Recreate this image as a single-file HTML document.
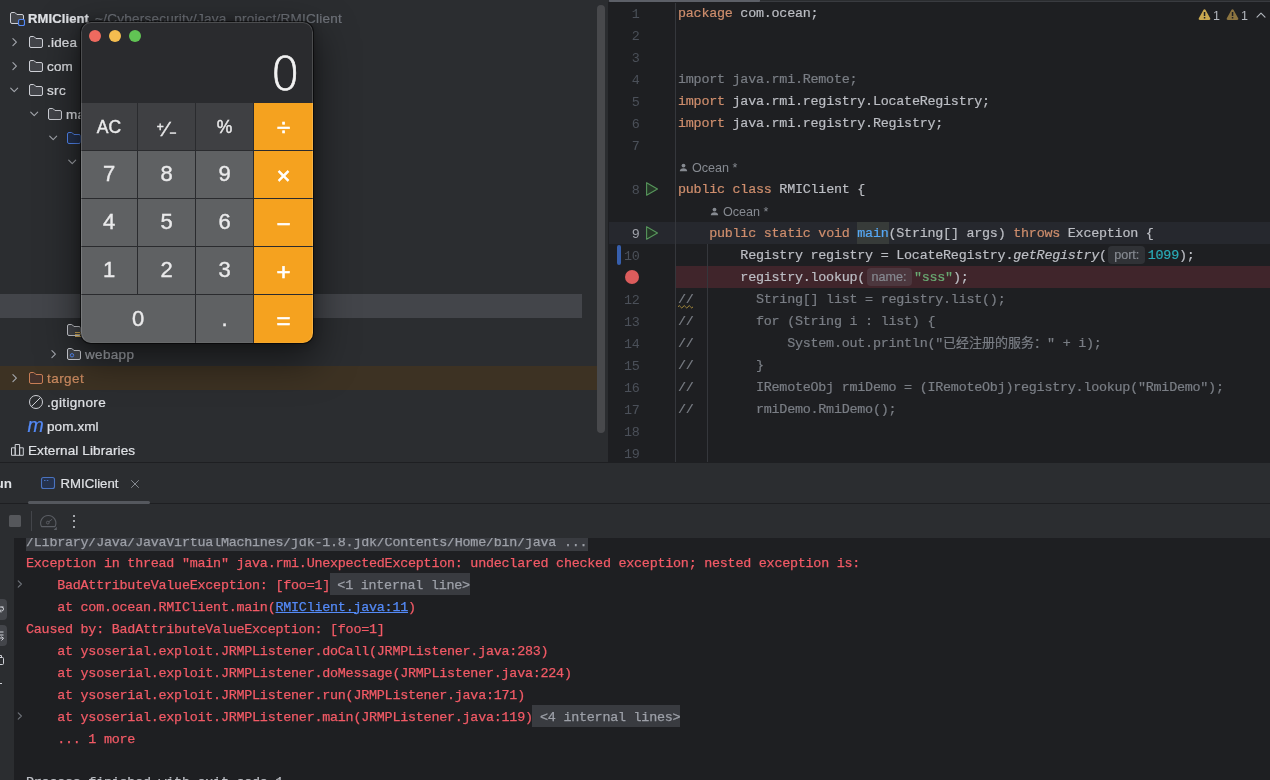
<!DOCTYPE html>
<html lang="en">
<head>
<meta charset="utf-8">
<title>RMIClient</title>
<style>
*{box-sizing:border-box;margin:0;padding:0}
html,body{width:1270px;height:780px;overflow:hidden;background:#2b2d30}
body{position:relative;font-family:"Liberation Sans","Noto Sans CJK SC",sans-serif;font-size:13px;color:#dfe1e5}
.abs{position:absolute}
/* project tree */
#tree{position:absolute;left:0;top:0;width:608px;height:462px;background:#2b2d30;overflow:hidden}
.row{position:absolute;left:0;width:597px;height:24px;line-height:24px;white-space:nowrap;font-size:13.500px;color:#dfe1e5;letter-spacing:0.200px}
.row .t{position:absolute;top:0.500px;-webkit-text-stroke:0.220px currentColor}
.row svg{position:absolute}
.sel{background:#43454a;width:582px}
.excl{background:#3d3223}
.dim{color:#6f737a}
/* editor */
#editor{position:absolute;left:609px;top:0;width:661px;height:462px;background:#1e1f22;overflow:hidden}
.ln{margin-top:2px;position:absolute;left:0;width:30.500px;text-align:right;height:22px;line-height:22px;font-family:"Liberation Mono",monospace;font-size:13.400px;letter-spacing:-0.240px;color:#4b5059}
.cl{-webkit-text-stroke:0.200px currentColor;margin-top:1.400px;position:absolute;left:69px;height:22px;line-height:22px;white-space:pre;font-family:"Liberation Mono","Noto Sans CJK SC",monospace;font-size:13.400px;letter-spacing:-0.240px;color:#bcbec4}
.k{color:#cf8e6d}.s{color:#6aab73}.n{color:#2aacb8}.c{color:#7a7e85}.m{color:#56a8f5}
.hint{letter-spacing:0;display:inline-block;font-family:"Liberation Sans",sans-serif;font-size:12.6px;color:#868a91;background:rgba(140,150,160,.16);border-radius:4px;height:18px;line-height:18px;text-align:center;vertical-align:top;margin-top:0.600px;margin-left:1.500px}
.auth{margin-top:0.700px;position:absolute;height:22px;line-height:22px;font-size:12.6px;color:#868a91;white-space:nowrap}
/* bottom */
#bottom{position:absolute;left:0;top:462px;width:1270px;height:318px;background:#2b2d30}
#console{position:absolute;left:14px;top:76px;width:1256px;height:242px;background:#1e1f22;overflow:hidden}
.ol{-webkit-text-stroke:0.250px currentColor;margin-top:1.500px;position:absolute;left:12px;height:22px;line-height:22px;white-space:pre;font-family:"Liberation Mono",monospace;font-size:13.400px;letter-spacing:-0.240px;color:#f25a66}
.fold{background:#393b40;color:#9da0a8;display:inline-block;height:22px;line-height:22px;margin-top:-1.500px;padding-top:1.500px;vertical-align:top;margin-left:-0.500px}
.lnk{color:#548af7;text-decoration:underline}

#calc{position:absolute;left:81px;top:22px;width:232px;height:321px;border-radius:10px;background:#2a2b2e;box-shadow:0 0 0 1px rgba(0,0,0,.55),0 14px 38px 4px rgba(0,0,0,.5),0 0 10px rgba(0,0,0,.3);overflow:hidden;font-family:"Liberation Sans",sans-serif}
#calc:after{content:"";position:absolute;left:0;top:0;right:0;bottom:0;border-radius:10px;border:1px solid rgba(255,255,255,.16);pointer-events:none;border-bottom-color:rgba(255,255,255,.05)}
#calc .tl{position:absolute;top:8px;width:12px;height:12px;border-radius:50%}
#calc .b{position:absolute;height:47px;line-height:46px;-webkit-text-stroke:0.400px #eaeaeb;text-align:center;color:#eaeaeb;font-size:22px;background:#5f6163}
#calc .f{background:#3f4043;font-size:17.500px;-webkit-text-stroke:0.400px #eaeaeb;padding-top:1px}
#calc .o{background:#f5a21f;color:#fff;font-size:24px;-webkit-text-stroke:0.600px #fff;padding-top:2px}
#disp{position:absolute;right:13px;top:25px;height:54px;line-height:54px;font-family:"DejaVu Sans Light","DejaVu Sans",sans-serif;font-weight:200;font-size:46.500px;color:#f2f2f2;-webkit-text-stroke:0.700px #f2f2f2}
</style>
</head>
<body>
<div id="root" style="position:absolute;left:0;top:0;width:1270px;height:780px;will-change:transform">
<div id="tree">
<div class="row " style="top:6px"><svg style="left:9px;top:4px" width="16" height="16" viewBox="0 0 16 16"><path d="M1.5 4a1.5 1.5 0 0 1 1.5-1.5h2.6a1 1 0 0 1 .75.34L7.9 4.5h5.1a1.5 1.5 0 0 1 1.5 1.5v6a1.5 1.5 0 0 1-1.5 1.5h-10a1.5 1.5 0 0 1-1.5-1.5z" fill="#43454a" stroke="#ced0d6" stroke-width="1"/><rect x="9.5" y="9.5" width="6" height="6" rx="1.5" fill="#2b2d30" stroke="#548af7" stroke-width="1.2"/></svg><span class="t " style="left:28px;font-weight:700;font-size:13px;letter-spacing:0.120px">RMIClient</span><span class="t dim" style="left:95px;letter-spacing:0.250px">~/Cybersecurity/Java_project/RMIClient</span></div>
<div class="row " style="top:30px"><svg style="left:6px;top:4px" width="16" height="16" viewBox="0 0 16 16"><path d="M6.900 4.700l3.500 3.500-3.500 3.500" fill="none" stroke="#a4a7ad" stroke-width="1.100" stroke-linecap="round" stroke-linejoin="round"/></svg><svg style="left:28px;top:4px" width="16" height="16" viewBox="0 0 16 16"><path d="M1.5 4a1.5 1.5 0 0 1 1.5-1.5h2.6a1 1 0 0 1 .75.34L7.9 4.5h5.1a1.5 1.5 0 0 1 1.5 1.5v6a1.5 1.5 0 0 1-1.5 1.5h-10a1.5 1.5 0 0 1-1.5-1.5z" fill="#43454a" stroke="#ced0d6" stroke-width="1"/></svg><span class="t " style="left:47px;letter-spacing:0.200px">.idea</span></div>
<div class="row " style="top:54px"><svg style="left:6px;top:4px" width="16" height="16" viewBox="0 0 16 16"><path d="M6.900 4.700l3.500 3.500-3.500 3.500" fill="none" stroke="#a4a7ad" stroke-width="1.100" stroke-linecap="round" stroke-linejoin="round"/></svg><svg style="left:28px;top:4px" width="16" height="16" viewBox="0 0 16 16"><path d="M1.5 4a1.5 1.5 0 0 1 1.5-1.5h2.6a1 1 0 0 1 .75.34L7.9 4.5h5.1a1.5 1.5 0 0 1 1.5 1.5v6a1.5 1.5 0 0 1-1.5 1.5h-10a1.5 1.5 0 0 1-1.5-1.5z" fill="#43454a" stroke="#ced0d6" stroke-width="1"/></svg><span class="t " style="left:47px;letter-spacing:0.160px">com</span></div>
<div class="row " style="top:78px"><svg style="left:6px;top:4px" width="16" height="16" viewBox="0 0 16 16"><path d="M4.700 6.100l3.500 3.500 3.500-3.500" fill="none" stroke="#a4a7ad" stroke-width="1.100" stroke-linecap="round" stroke-linejoin="round"/></svg><svg style="left:28px;top:4px" width="16" height="16" viewBox="0 0 16 16"><path d="M1.5 4a1.5 1.5 0 0 1 1.5-1.5h2.6a1 1 0 0 1 .75.34L7.9 4.5h5.1a1.5 1.5 0 0 1 1.5 1.5v6a1.5 1.5 0 0 1-1.5 1.5h-10a1.5 1.5 0 0 1-1.5-1.5z" fill="#43454a" stroke="#ced0d6" stroke-width="1"/></svg><span class="t " style="left:47px;letter-spacing:0.330px">src</span></div>
<div class="row " style="top:102px"><svg style="left:26px;top:4px" width="16" height="16" viewBox="0 0 16 16"><path d="M4.700 6.100l3.500 3.500 3.500-3.500" fill="none" stroke="#a4a7ad" stroke-width="1.100" stroke-linecap="round" stroke-linejoin="round"/></svg><svg style="left:47px;top:4px" width="16" height="16" viewBox="0 0 16 16"><path d="M1.5 4a1.5 1.5 0 0 1 1.5-1.5h2.6a1 1 0 0 1 .75.34L7.9 4.5h5.1a1.5 1.5 0 0 1 1.5 1.5v6a1.5 1.5 0 0 1-1.5 1.5h-10a1.5 1.5 0 0 1-1.5-1.5z" fill="#43454a" stroke="#ced0d6" stroke-width="1"/></svg><span class="t " style="left:66px;letter-spacing:0.200px">main</span></div>
<div class="row " style="top:126px"><svg style="left:45px;top:4px" width="16" height="16" viewBox="0 0 16 16"><path d="M4.700 6.100l3.500 3.500 3.500-3.500" fill="none" stroke="#a4a7ad" stroke-width="1.100" stroke-linecap="round" stroke-linejoin="round"/></svg><svg style="left:66px;top:4px" width="16" height="16" viewBox="0 0 16 16"><path d="M1.5 4a1.5 1.5 0 0 1 1.5-1.5h2.6a1 1 0 0 1 .75.34L7.9 4.5h5.1a1.5 1.5 0 0 1 1.5 1.5v6a1.5 1.5 0 0 1-1.5 1.5h-10a1.5 1.5 0 0 1-1.5-1.5z" fill="#25324d" stroke="#548af7" stroke-width="1"/></svg><span class="t " style="left:85px;letter-spacing:0.200px">java</span></div>
<div class="row " style="top:150px"><svg style="left:64px;top:4px" width="16" height="16" viewBox="0 0 16 16"><path d="M4.700 6.100l3.500 3.500 3.500-3.500" fill="none" stroke="#a4a7ad" stroke-width="1.100" stroke-linecap="round" stroke-linejoin="round"/></svg><svg style="left:85px;top:4px" width="16" height="16" viewBox="0 0 16 16"><path d="M1.5 4a1.5 1.5 0 0 1 1.5-1.5h2.6a1 1 0 0 1 .75.34L7.9 4.5h5.1a1.5 1.5 0 0 1 1.5 1.5v6a1.5 1.5 0 0 1-1.5 1.5h-10a1.5 1.5 0 0 1-1.5-1.5z" fill="#43454a" stroke="#ced0d6" stroke-width="1"/></svg><span class="t " style="left:104px;letter-spacing:0.200px">com.ocean</span></div>
<div class="row sel" style="top:294px"></div>
<div class="row " style="top:318px"><svg style="left:66px;top:4px" width="16" height="16" viewBox="0 0 16 16"><path d="M1.5 4a1.5 1.5 0 0 1 1.5-1.5h2.6a1 1 0 0 1 .75.34L7.9 4.5h5.1a1.5 1.5 0 0 1 1.5 1.5v6a1.5 1.5 0 0 1-1.5 1.5h-10a1.5 1.5 0 0 1-1.5-1.5z" fill="#43454a" stroke="#ced0d6" stroke-width="1"/><path d="M9 10.5h6M9 12.5h6M9 14.5h6" stroke="#d6ae58" stroke-width="1"/></svg><span class="t " style="left:85px;letter-spacing:0.200px">resources</span></div>
<div class="row " style="top:342px"><svg style="left:45px;top:4px" width="16" height="16" viewBox="0 0 16 16"><path d="M6.900 4.700l3.500 3.500-3.500 3.500" fill="none" stroke="#a4a7ad" stroke-width="1.100" stroke-linecap="round" stroke-linejoin="round"/></svg><svg style="left:66px;top:4px" width="16" height="16" viewBox="0 0 16 16"><path d="M1.5 4a1.5 1.5 0 0 1 1.5-1.5h2.6a1 1 0 0 1 .75.34L7.9 4.5h5.1a1.5 1.5 0 0 1 1.5 1.5v6a1.5 1.5 0 0 1-1.5 1.5h-10a1.5 1.5 0 0 1-1.5-1.5z" fill="#43454a" stroke="#ced0d6" stroke-width="1"/><circle cx="6" cy="9.300" r="1.700" fill="none" stroke="#548af7" stroke-width="1"/></svg><span class="t " style="left:85px;color:#a4a7ad;letter-spacing:0.330px">webapp</span></div>
<div class="row excl" style="top:366px"><svg style="left:6px;top:4px" width="16" height="16" viewBox="0 0 16 16"><path d="M6.900 4.700l3.500 3.500-3.500 3.500" fill="none" stroke="#a4a7ad" stroke-width="1.100" stroke-linecap="round" stroke-linejoin="round"/></svg><svg style="left:28px;top:4px" width="16" height="16" viewBox="0 0 16 16"><path d="M1.5 4a1.5 1.5 0 0 1 1.5-1.5h2.6a1 1 0 0 1 .75.34L7.9 4.5h5.1a1.5 1.5 0 0 1 1.5 1.5v6a1.5 1.5 0 0 1-1.5 1.5h-10a1.5 1.5 0 0 1-1.5-1.5z" fill="#45322b" stroke="#c77d55" stroke-width="1"/></svg><span class="t " style="left:47px;color:#c9895f;letter-spacing:0.445px">target</span></div>
<div class="row " style="top:390px"><svg style="left:28px;top:4px" width="16" height="16" viewBox="0 0 16 16"><circle cx="8" cy="8" r="6.500" fill="none" stroke="#ced0d6" stroke-width="1"/><path d="M3.400 12.600l9.200-9.200" stroke="#ced0d6" stroke-width="1"/></svg><span class="t " style="left:47px;letter-spacing:0.345px">.gitignore</span></div>
<div class="row " style="top:414px"><span class="t" style="left:28px;color:#548af7;font-style:italic;font-size:19.500px;font-family:'Liberation Sans',sans-serif;top:-1.500px;left:27.500px">m</span><span class="t " style="left:47px;letter-spacing:0.100px">pom.xml</span></div>
<div class="row " style="top:438px"><svg style="left:9px;top:4px" width="16" height="16" viewBox="0 0 16 16"><path d="M2.500 5.800h3.700v7.500h-3.700zM6.200 2.500h4.400v10.800h-4.400zM10.600 5.800h3.700v7.500h-3.700z" fill="none" stroke="#ced0d6" stroke-width="1"/></svg><span class="t " style="left:28px;letter-spacing:0.120px">External Libraries</span></div>
<div class="abs" style="left:597px;top:5px;width:8px;height:428px;border-radius:4px;background:#48494c"></div>
</div>
<div class="abs" style="left:608px;top:2px;width:1px;height:460px;background:#1e1f22"></div>
<div id="editor">
<div class="abs" style="left:0;top:0;width:661px;height:2px;background:#2b2d30;border-bottom:1px solid #393b40"></div>
<div class="abs" style="left:0;top:0;width:151px;height:2px;background:#5c5f67;border-radius:0 0 1px 1px"></div>
<div class="abs" style="left:0;top:222px;width:661px;height:22px;background:#26282e"></div>
<div class="abs" style="left:67px;top:266px;width:594px;height:22px;background:#40252b"></div>
<div class="abs" style="left:66px;top:3px;width:1px;height:460px;background:#35373c"></div>
<div class="abs" style="left:98px;top:244px;width:1px;height:240px;background:#35373c"></div>
<div class="abs" style="left:7.5px;top:245px;width:4px;height:20px;border-radius:2px;background:#375fad"></div>
<div class="ln" style="top:2px">1</div>
<div class="ln" style="top:24px">2</div>
<div class="ln" style="top:46px">3</div>
<div class="ln" style="top:68px">4</div>
<div class="ln" style="top:90px">5</div>
<div class="ln" style="top:112px">6</div>
<div class="ln" style="top:134px">7</div>
<div class="ln" style="top:178px;width:30.5px">8</div>
<div class="ln" style="top:222px;width:30.5px;color:#a1a3ab">9</div>
<div class="ln" style="top:244px">10</div>
<div class="ln" style="top:288px">12</div>
<div class="ln" style="top:310px">13</div>
<div class="ln" style="top:332px">14</div>
<div class="ln" style="top:354px">15</div>
<div class="ln" style="top:376px">16</div>
<div class="ln" style="top:398px">17</div>
<div class="ln" style="top:420px">18</div>
<div class="ln" style="top:442px">19</div>
<svg class="abs" style="left:35px;top:181px" width="16" height="16" viewBox="0 0 16 16"><path d="M2.600 1.700v12.600l10.900-6.300z" fill="#253627" stroke="#57965c" stroke-width="1.100" stroke-linejoin="round"/></svg>
<svg class="abs" style="left:35px;top:225px" width="16" height="16" viewBox="0 0 16 16"><path d="M2.600 1.700v12.600l10.900-6.300z" fill="#253627" stroke="#57965c" stroke-width="1.100" stroke-linejoin="round"/></svg>
<div class="abs" style="left:16px;top:270px;width:14px;height:14px;border-radius:50%;background:#db5c5c"></div>
<div class="cl" style="top:2px;"><span class="k">package</span> com.ocean;</div>
<div class="cl" style="top:68px;"><span class="c">import java.rmi.Remote;</span></div>
<div class="cl" style="top:90px;"><span class="k">import</span> java.rmi.registry.LocateRegistry;</div>
<div class="cl" style="top:112px;"><span class="k">import</span> java.rmi.registry.Registry;</div>
<div class="cl" style="top:178px;"><span class="k">public</span> <span class="k">class</span> RMIClient {</div>
<div class="cl" style="top:222px;">    <span class="k">public</span> <span class="k">static</span> <span class="k">void</span> <span class="m" style="background:#373b39;display:inline-block;height:22px;margin-top:-1.400px;padding-top:1.400px;vertical-align:top">main</span>(String[] args) <span class="k">throws</span> Exception {</div>
<div class="cl" style="top:244px;">        Registry registry = LocateRegistry.<i>getRegistry</i>(<span class="hint" style="width:37px;margin-right:2.500px">port:</span><span class="n">1099</span>);</div>
<div class="cl" style="top:266px;">        registry.lookup(<span class="hint" style="width:45px;margin-right:2.300px">name:</span><span class="s">"sss"</span>);</div>
<div class="cl" style="top:288px;"><span class="c">//</span><span class="c">        String[] list = registry.list();</span></div>
<div class="cl" style="top:310px;"><span class="c">//        for (String i : list) {</span></div>
<div class="cl" style="top:332px;"><span class="c">//            System.out.println("<span style="font-size:13px;letter-spacing:0">已经注册的服务：</span>" + i);</span></div>
<div class="cl" style="top:354px;"><span class="c">//        }</span></div>
<div class="cl" style="top:376px;"><span class="c">//        IRemoteObj rmiDemo = (IRemoteObj)registry.lookup("RmiDemo");</span></div>
<div class="cl" style="top:398px;"><span class="c">//        rmiDemo.RmiDemo();</span></div>
<svg class="abs" style="left:68px;top:302px" width="18" height="8" viewBox="0 0 18 8"><path d="M1 4.800q1.250-2.400 2.500 0t2.500 0 2.500 0 2.500 0 2.500 0 2.500 0" fill="none" stroke="#a68a3c" stroke-width="1"/></svg>
<div class="auth" style="left:70px;top:156px"><svg width="9" height="9" viewBox="0 0 9 9" style="vertical-align:-0.5px;margin-right:4px"><circle cx="4.5" cy="2.6" r="1.9" fill="#868a91"/><path d="M0.8 8.2c0-2 1.6-3 3.7-3s3.700 1 3.700 3z" fill="#868a91"/></svg>Ocean *</div>
<div class="auth" style="left:101px;top:200px"><svg width="9" height="9" viewBox="0 0 9 9" style="vertical-align:-0.5px;margin-right:4px"><circle cx="4.5" cy="2.6" r="1.9" fill="#868a91"/><path d="M0.8 8.2c0-2 1.6-3 3.7-3s3.700 1 3.700 3z" fill="#868a91"/></svg>Ocean *</div>
<svg class="abs" style="left:588.5px;top:8px" width="13" height="13" viewBox="0 0 13 13"><path d="M6.5 1.2c.5 0 .9.3 1.100.7l4.600 8.300c.4.800-.100 1.700-1.100 1.700h-9.200c-1 0-1.500-.9-1.100-1.700l4.600-8.300c.2-.4.600-.7 1.100-.7z" fill="#c9a84f"/><rect x="5.800" y="4" width="1.500" height="4" fill="#1e1f22"/><rect x="5.800" y="9" width="1.500" height="1.500" fill="#1e1f22"/></svg>
<div class="abs" style="left:604px;top:7.500px;font-size:12.500px;line-height:16px;color:#b4b8bf">1</div>
<svg class="abs" style="left:616.5px;top:8px" width="13" height="13" viewBox="0 0 13 13"><path d="M6.5 1.2c.5 0 .9.3 1.100.7l4.600 8.300c.4.800-.100 1.700-1.100 1.700h-9.200c-1 0-1.500-.9-1.100-1.700l4.600-8.300c.2-.4.600-.7 1.100-.7z" fill="#8c7440"/><rect x="5.800" y="4" width="1.500" height="4" fill="#1e1f22"/><rect x="5.800" y="9" width="1.500" height="1.500" fill="#1e1f22"/></svg>
<div class="abs" style="left:632px;top:7.500px;font-size:12.500px;line-height:16px;color:#b4b8bf">1</div>
<svg class="abs" style="left:645px;top:8px" width="14" height="14" viewBox="0 0 14 14"><path d="M3 9.200l4-4 4 4" fill="none" stroke="#b4b8bf" stroke-width="1.100" stroke-linecap="round" stroke-linejoin="round"/></svg>
</div>
<div id="bottom">
<div class="abs" style="left:0;top:0;width:1270px;height:1px;background:#1e1f22"></div>
<div class="abs" style="left:-14.200px;top:10px;height:24px;line-height:24px;font-size:13.500px;font-weight:700;color:#dfe1e5">Run</div>
<svg class="abs" style="left:40px;top:13px" width="16" height="16" viewBox="0 0 16 16"><rect x="1.500" y="2.500" width="13" height="11" rx="2" fill="#25324d" stroke="#4a73c0" stroke-width="1.100"/><path d="M4 5.500h1.500M6.800 5.500h1.500" stroke="#4a73c0" stroke-width="1"/></svg>
<div class="abs" style="left:60.500px;top:9.500px;height:24px;line-height:24px;font-size:13.200px;color:#dfe1e5;-webkit-text-stroke:0.200px #dfe1e5">RMIClient</div>
<svg class="abs" style="left:127px;top:14px" width="16" height="16" viewBox="0 0 16 16"><path d="M4.500 4.500l7 7M11.500 4.500l-7 7" stroke="#868a91" stroke-width="1" stroke-linecap="round"/></svg>
<div class="abs" style="left:0;top:41px;width:1270px;height:1px;background:#1e1f22"></div>
<div class="abs" style="left:28px;top:39px;width:122px;height:3px;border-radius:1.500px;background:#55585e"></div>
<div class="abs" style="left:9px;top:53px;width:12px;height:12px;border-radius:1.500px;background:#55575b"></div>
<div class="abs" style="left:31px;top:49px;width:1px;height:20px;background:#43454a"></div>
<svg class="abs" style="left:40px;top:52px" width="18" height="17" viewBox="0 0 18 17"><path d="M1.500 12.600a7.600 7.600 0 1 1 13.500 0z" fill="none" stroke="#5a5d63" stroke-width="1.100" stroke-linejoin="round"/><circle cx="7.800" cy="8.600" r="1.400" fill="none" stroke="#5a5d63" stroke-width="1"/><path d="M8.900 7.700l3-2.300" stroke="#5a5d63" stroke-width="1" stroke-linecap="round"/><path d="M16.800 12.800v3.200h-3.200z" fill="#5a5d63"/></svg>
<div class="abs" style="left:73px;top:52.500px;width:2.200px;height:2.200px;border-radius:50%;background:#ced0d6"></div>
<div class="abs" style="left:73px;top:58px;width:2.200px;height:2.200px;border-radius:50%;background:#ced0d6"></div>
<div class="abs" style="left:73px;top:63.500px;width:2.200px;height:2.200px;border-radius:50%;background:#ced0d6"></div>
<div class="abs" style="left:-10px;top:136.500px;width:16.500px;height:21.500px;border-radius:4px;background:#43454a"></div>
<div class="abs" style="left:-10px;top:162.500px;width:16.500px;height:21.500px;border-radius:4px;background:#43454a"></div>
<svg class="abs" style="left:-9px;top:139px" width="16" height="16" viewBox="0 0 16 16"><path d="M4 6h8.500M4 10h6.500a2 2 0 0 0 0-4M10 8.500l-1.500 1.500 1.500 1.500" fill="none" stroke="#ced0d6" stroke-width="1"/></svg>
<svg class="abs" style="left:-9px;top:165px" width="16" height="16" viewBox="0 0 16 16"><path d="M4 5h8.500M4 8h8.500M8 11h4.500M10.500 9.500l2 2-2 2" fill="none" stroke="#ced0d6" stroke-width="1"/></svg>
<svg class="abs" style="left:-9px;top:190px" width="16" height="16" viewBox="0 0 16 16"><rect x="3.500" y="5.500" width="9" height="7" rx="1" fill="none" stroke="#ced0d6" stroke-width="1"/><path d="M5.500 5.500v-2h5v2" fill="none" stroke="#ced0d6" stroke-width="1"/></svg>
<div class="abs" style="left:0;top:220.500px;width:2px;height:1.500px;background:#ced0d6"></div>
<div id="console">
<div class="abs" style="left:12px;top:0;width:561.600px;height:13px;background:#393b40"></div>
<div class="ol" style="top:-8px;color:#9da0a8">/Library/Java/JavaVirtualMachines/jdk-1.8.jdk/Contents/Home/bin/java ...</div>
<div class="ol" style="top:13px;">Exception in thread "main" java.rmi.UnexpectedException: undeclared checked exception; nested exception is: </div>
<div class="ol" style="top:35px;">    BadAttributeValueException: [foo=1]<span class="fold"> &lt;1 internal line&gt;</span></div>
<div class="ol" style="top:57px;">    at com.ocean.RMIClient.main(<span class="lnk">RMIClient.java:11</span>)</div>
<div class="ol" style="top:79px;">Caused by: BadAttributeValueException: [foo=1]</div>
<div class="ol" style="top:101px;">    at ysoserial.exploit.JRMPListener.doCall(JRMPListener.java:283)</div>
<div class="ol" style="top:123px;">    at ysoserial.exploit.JRMPListener.doMessage(JRMPListener.java:224)</div>
<div class="ol" style="top:145px;">    at ysoserial.exploit.JRMPListener.run(JRMPListener.java:171)</div>
<div class="ol" style="top:167px;">    at ysoserial.exploit.JRMPListener.main(JRMPListener.java:119)<span class="fold"> &lt;4 internal lines&gt;</span></div>
<div class="ol" style="top:189px;">    ... 1 more</div>
<div class="ol" style="top:232.200px;color:#bcbec4">Process finished with exit code 1</div>
<svg class="abs" style="left:-2px;top:38px" width="16" height="16" viewBox="0 0 16 16"><path d="M6.200 4.800l3.200 3.200-3.200 3.200" fill="none" stroke="#6f737a" stroke-width="1.100" stroke-linecap="round" stroke-linejoin="round"/></svg>
<svg class="abs" style="left:-2px;top:170px" width="16" height="16" viewBox="0 0 16 16"><path d="M6.200 4.800l3.200 3.200-3.200 3.200" fill="none" stroke="#6f737a" stroke-width="1.100" stroke-linecap="round" stroke-linejoin="round"/></svg>
</div>
</div>
<div id="calc">
<div class="tl" style="left:8px;background:#ee6a5f"></div>
<div class="tl" style="left:28px;background:#f5bd4f"></div>
<div class="tl" style="left:48px;background:#61c454"></div>
<div id="disp">0</div>
<div class="b f" style="left:0px;top:81px;width:56px">AC</div>
<div class="b f" style="left:57px;top:81px;width:57px"><span style="font-size:12px;vertical-align:5px">+</span><span style="font-size:21px;margin:0 1px">⁄</span><span style="font-size:12px;vertical-align:-1px">−</span></div>
<div class="b f" style="left:115px;top:81px;width:57px">%</div>
<div class="b o" style="left:173px;top:81px;width:59px">÷</div>
<div class="b " style="left:0px;top:129px;width:56px">7</div>
<div class="b " style="left:57px;top:129px;width:57px">8</div>
<div class="b " style="left:115px;top:129px;width:57px">9</div>
<div class="b o" style="left:173px;top:129px;width:59px">×</div>
<div class="b " style="left:0px;top:177px;width:56px">4</div>
<div class="b " style="left:57px;top:177px;width:57px">5</div>
<div class="b " style="left:115px;top:177px;width:57px">6</div>
<div class="b o" style="left:173px;top:177px;width:59px">−</div>
<div class="b " style="left:0px;top:225px;width:56px">1</div>
<div class="b " style="left:57px;top:225px;width:57px">2</div>
<div class="b " style="left:115px;top:225px;width:57px">3</div>
<div class="b o" style="left:173px;top:225px;width:59px">+</div>
<div class="b " style="left:0px;top:273px;width:114px;height:48px;line-height:48px">0</div>
<div class="b " style="left:115px;top:273px;width:57px;height:48px;line-height:48px">.</div>
<div class="b o" style="left:173px;top:273px;width:59px;height:48px;line-height:48px">=</div>
</div>
</div>
</body>
</html>
